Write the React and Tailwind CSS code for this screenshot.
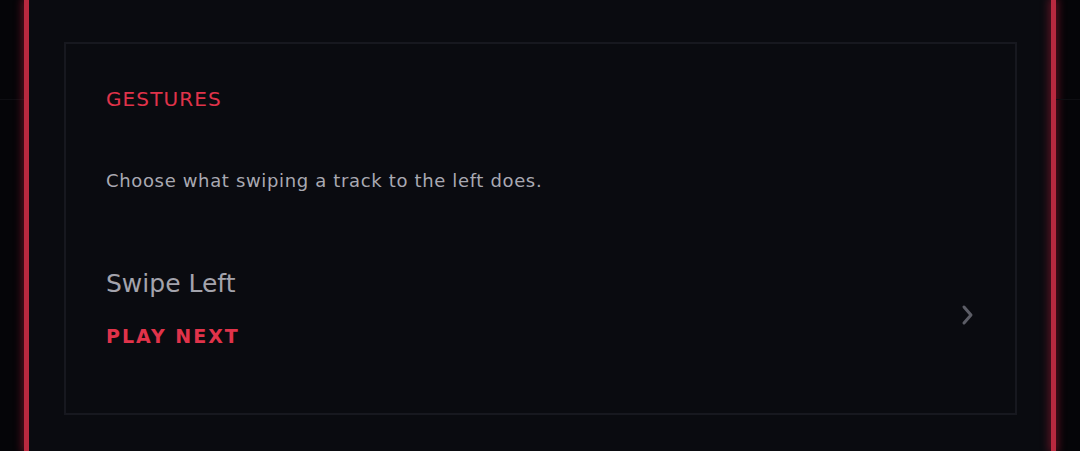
export default function App() {
  return (
    <div className="w-[1080px] h-[451px] overflow-hidden bg-[#050508] flex" style={{ fontFamily: '"DejaVu Sans", sans-serif' }}>
      <div className="w-[24px] shrink-0 flex flex-col">
        <div className="h-[100px] border-b border-[#0e0e12]" />
      </div>
      <div className="w-[5px] shrink-0 bg-[#b8293f] shadow-[0_0_8px_2px_rgba(200,30,60,0.45)]" />
      <div className="flex-1 bg-[#0a0b10] pt-[42px] pl-[35px] pr-[34px]">
        <div className="border-2 border-[#17181f] h-[373px] pl-[40px] pr-[40px] pt-[40px] flex flex-col">
          <div className="text-[20px] leading-[30px] text-[#e0334a] tracking-[1.1px]">GESTURES</div>
          <div className="mt-[53px] text-[18px] leading-[28px] text-[#a9a9b2] tracking-[0.65px]">Choose what swiping a track to the left does.</div>
          <div className="mt-[72px] flex items-center justify-between">
            <div className="flex flex-col">
              <div className="text-[25px] leading-[34px] text-[#a3a3ac]">Swipe Left</div>
              <div className="mt-[20px] text-[19px] leading-[30px] font-bold text-[#e0334a] tracking-[2px]">PLAY NEXT</div>
            </div>
            <svg width="16" height="22" viewBox="0 0 16 22" className="mt-[11px]">
              <path d="M5 3 L12 11 L5 19" fill="none" stroke="#5c5d66" strokeWidth="3" strokeLinecap="round" strokeLinejoin="round" />
            </svg>
          </div>
        </div>
      </div>
      <div className="w-[5px] shrink-0 bg-[#b8293f] shadow-[0_0_8px_2px_rgba(200,30,60,0.45)]" />
      <div className="w-[24px] shrink-0 flex flex-col">
        <div className="h-[100px] border-b border-[#0e0e12]" />
      </div>
    </div>
  );
}
